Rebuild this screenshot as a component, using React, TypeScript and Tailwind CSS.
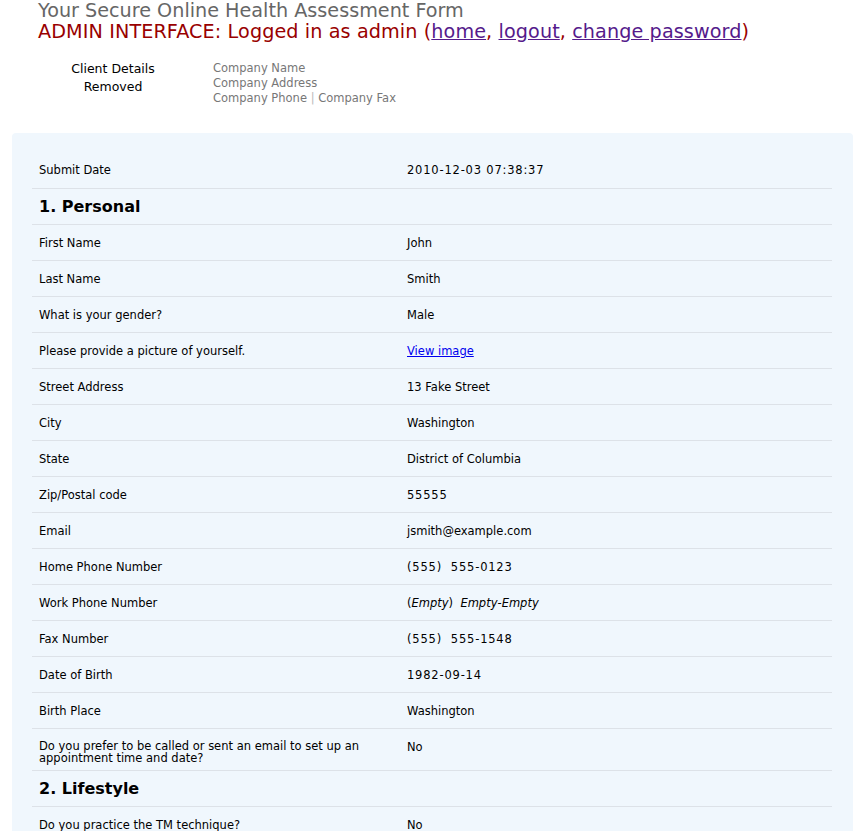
import React from "react";

type Row =
  | { kind: "row"; label: string; value: React.ReactNode; tall?: boolean; num?: boolean }
  | { kind: "head"; label: string };

const rows: Row[] = [
  { kind: "row", label: "Submit Date", value: "2010-12-03 07:38:37", num: true },
  { kind: "head", label: "1. Personal" },
  { kind: "row", label: "First Name", value: "John" },
  { kind: "row", label: "Last Name", value: "Smith" },
  { kind: "row", label: "What is your gender?", value: "Male" },
  {
    kind: "row",
    label: "Please provide a picture of yourself.",
    value: (
      <a href="#" className="text-[#0000ee] underline">
        View image
      </a>
    ),
  },
  { kind: "row", label: "Street Address", value: "13 Fake Street" },
  { kind: "row", label: "City", value: "Washington" },
  { kind: "row", label: "State", value: "District of Columbia" },
  { kind: "row", label: "Zip/Postal code", value: "55555", num: true },
  { kind: "row", label: "Email", value: "jsmith@example.com" },
  { kind: "row", label: "Home Phone Number", value: "(555)\u00a0 555-0123", num: true },
  {
    kind: "row",
    label: "Work Phone Number",
    value: (
      <span>
        (<i>Empty</i>)&nbsp; <i>Empty</i>-<i>Empty</i>
      </span>
    ),
  },
  { kind: "row", label: "Fax Number", value: "(555)\u00a0 555-1548", num: true },
  { kind: "row", label: "Date of Birth", value: "1982-09-14", num: true },
  { kind: "row", label: "Birth Place", value: "Washington" },
  {
    kind: "row",
    label: "Do you prefer to be called or sent an email to set up an appointment time and date?",
    value: "No",
    tall: true,
  },
  { kind: "head", label: "2. Lifestyle" },
  { kind: "row", label: "Do you practice the TM technique?", value: "No" },
];

export default function App() {
  return (
    <div
      className="min-h-[831px] bg-white text-black"
      style={{ fontFamily: '"DejaVu Sans", Verdana, sans-serif' }}
    >
      <div className="pl-[38px] pt-[1px]">
        <div className="text-[19.2px] leading-[20px] text-[#666666]">
          Your Secure Online Health Assessment Form
        </div>
        <div className="text-[19.2px] leading-[21px] text-[#990000] tracking-[0.1px]">
          ADMIN INTERFACE: Logged in as admin (
          <a href="#" className="text-[#551a8b] underline">home</a>,{" "}
          <a href="#" className="text-[#551a8b] underline">logout</a>,{" "}
          <a href="#" className="text-[#551a8b] underline">change password</a>)
        </div>
      </div>

      <div className="mt-[17px] flex pl-[38px]">
        <div className="w-[150px] pt-[1px] text-center text-[12.5px] leading-[18px]">
          <div>Client Details</div>
          <div>Removed</div>
        </div>
        <div className="ml-[25px] pt-[2px] text-[11.5px] leading-[15px] text-[#777777]">
          <div>Company Name</div>
          <div>Company Address</div>
          <div>
            Company Phone <span className="text-[#bbbbbb]">|</span> Company Fax
          </div>
        </div>
      </div>

      <div className="mx-[12px] mt-[27px] rounded-[4px] bg-[#f0f7fd] px-[20px] pt-[19px] pb-[20px]">
        <div className="w-[800px]">
          {rows.map((r, i) => {
            const border = i > 0 ? "border-t border-[#dde2e8]" : "";
            if (r.kind === "head") {
              return (
                <div
                  key={i}
                  className={`${border} flex h-[36px] items-center px-[7px] pt-[1px] text-[16px] font-bold`}
                >
                  {r.label}
                </div>
              );
            }
            return (
              <div
                key={i}
                className={`${border} flex ${r.tall ? "h-[42px]" : "h-[36px]"} items-start pt-[11px] text-[11.5px]`}
              >
                <div
                  className={`w-[368px] pl-[7px] pr-[20px] ${r.tall ? "leading-[12px]" : "leading-[14px]"}`}
                >
                  {r.label}
                </div>
                <div
                  className={`pl-[7px] leading-[14px] ${r.num ? "tracking-[0.8px]" : ""}`}
                >
                  {r.value}
                </div>
              </div>
            );
          })}
        </div>
      </div>
    </div>
  );
}
